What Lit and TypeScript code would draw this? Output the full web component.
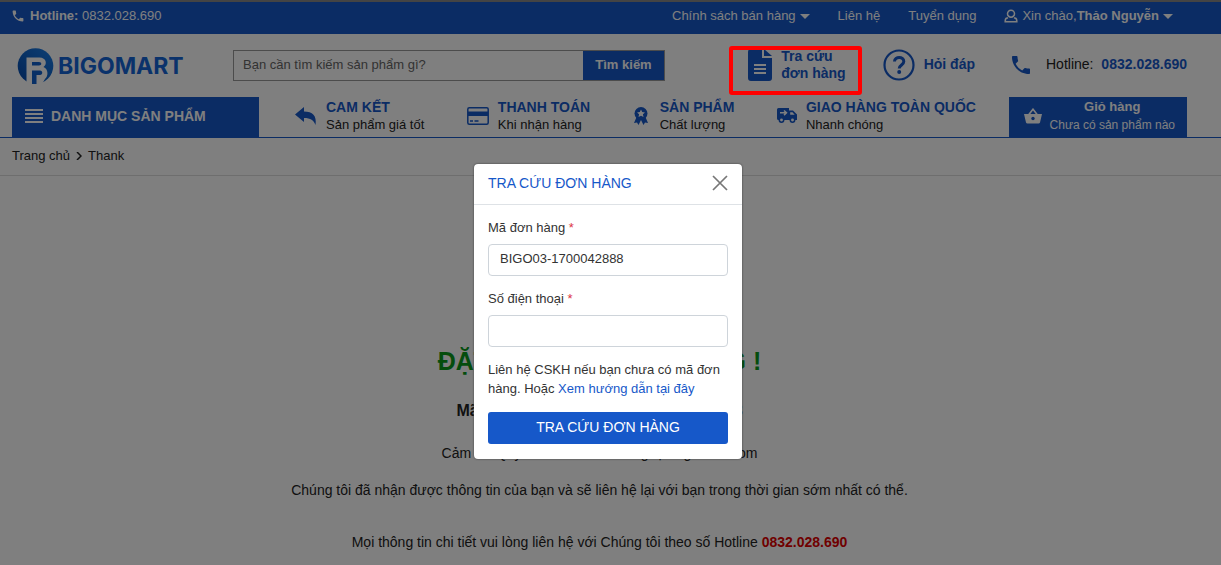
import { LitElement, html, css, svg } from "lit";
import { customElement, state } from "lit/decorators.js";

const icons = {
  phone: svg`<path fill="currentColor" d="M6.620 10.790c1.440 2.830 3.760 5.140 6.590 6.590l2.200-2.200c.27-.27.67-.36 1.020-.24 1.120.37 2.330.57 3.570.57.55 0 1 .45 1 1V20c0 .55-.45 1-1 1-9.390 0-17-7.610-17-17 0-.55.45-1 1-1h3.500c.55 0 1 .45 1 1 0 1.250.2 2.450.57 3.570.11.35.03.74-.25 1.020z"/>`,
  user: svg`<g fill="none" stroke="currentColor" stroke-width="2.600"><circle cx="12" cy="8" r="6"/><path d="M7 15.500H5.500c-2.500 0-3.500 2-3.500 6.500h20c0-4.500-1-6.500-3.500-6.500H17"/></g>`,
  file: svg`<path fill="currentColor" d="M3 0h11v9h10v20a3 3 0 0 1-3 3H3a3 3 0 0 1-3-3V3a3 3 0 0 1 3-3z"/><path fill="currentColor" d="M16 0l8 7h-8z"/><path stroke="#fff" stroke-width="2" d="M6 16h12M6 20h12M6 24h12"/>`,
  help: svg`<circle cx="16" cy="16" r="14.500" fill="none" stroke="currentColor" stroke-width="2.200"/><path d="M11.500 12.500c.2-5.500 9.300-5.500 9.300 0 0 3.500-4.600 3.400-4.600 7" fill="none" stroke="currentColor" stroke-width="3"/><circle cx="16.200" cy="23" r="2" fill="currentColor"/>`,
  reply: svg`<path fill="currentColor" d="M0 7.500L9 0v4.500c8.500 0 13 4 11.500 13.500-1.500-4.500-5-7-11.500-7V15z"/>`,
  card: svg`<rect x=".8" y=".8" width="20.400" height="16.400" rx="1.500" fill="none" stroke="currentColor" stroke-width="1.500"/><path fill="currentColor" d="M1 4.500h20v4.500H1z"/><path stroke="currentColor" stroke-width="1.500" d="M3 14h3M7.500 14h4"/>`,
  award: svg`<path fill="currentColor" d="M3 9L0 16l3-.5L4.500 18 7 13l2.500 5 1.500-2.500 3 .5-3-7z"/><circle cx="7" cy="6.500" r="6.500" fill="currentColor"/><path fill="#fff" d="M7 2.500l1.200 2.600 2.800.3-2.100 1.900.6 2.800L7 8.700l-2.500 1.400.6-2.800L3 5.400l2.800-.3z"/>`,
  truck: svg`<path fill="currentColor" d="M1.500 0H12v2.500h4l4 4V12H1.500A1.500 1.500 0 0 1 0 10.500v-9A1.500 1.500 0 0 1 1.500 0z"/><path fill="#fff" d="M13.200 4.200h2.300l2.200 2.600h-4.500z"/><path stroke="#fff" stroke-width="1.500" fill="none" d="M3 4.800h6M7 2.500l2.500 2.300L7 7.100"/><g fill="#fff" stroke="currentColor" stroke-width="1.500"><circle cx="4.500" cy="12" r="2.200"/><circle cx="15.500" cy="12" r="2.200"/></g>`,
  basket: svg`<path d="M4.500 7L9 1.200 13.500 7" fill="none" stroke="currentColor" stroke-width="1.600"/><path fill="currentColor" d="M0 6h18l-2 8.500a1.500 1.500 0 0 1-1.500 1H3.500a1.500 1.500 0 0 1-1.500-1z"/><circle cx="9" cy="10.500" r="1.700" fill="#1658c9"/>`,
};

@customElement("app-root")
export class AppRoot extends LitElement {
  @state() private code = "BIGO03-1700042888";
  @state() private open = true;

  static styles = css`
    :host {
      display: block;
      --blue: #1658c9;
      font-family: "Liberation Sans", Arial, sans-serif;
      font-size: 13px;
      line-height: 20px;
      color: #222;
    }
    * { box-sizing: border-box; }
    a { color: inherit; text-decoration: none; }
    button, input { font: inherit; color: inherit; }
    button { border: 0; cursor: pointer; }
    p, h1, h2 { margin: 0; }
    svg { display: block; flex: none; }
    .page { min-height: 100vh; background: #fff; border-top: 2px solid #888; overflow: hidden; }
    .wrap { display: flex; align-items: center; max-width: 1199px; padding: 0 12px; }
    .top { background: var(--blue); color: #fff; }
    .top .wrap { height: 32px; padding-bottom: 4px; }
    .top a { display: flex; align-items: center; gap: 4px; }
    .top .tel { gap: 6px; }
    .top nav { display: flex; gap: 28px; margin-left: auto; padding-right: 14px; }
    .caret { border: 5px solid transparent; border-top-color: currentColor; border-bottom: 0; }
    .head { height: 63px; }
    .logo { display: flex; align-items: center; gap: 4px; width: 221px; padding-left: 5px; font: 700 23px/36px Inter, sans-serif; color: #1465d6; }
    .search { display: flex; width: 432px; height: 31px; border: 1px solid #999; }
    .search input { flex: 1; min-width: 0; border: 0; padding: 0 9px 2px; background: #fff; outline: 0; }
    .search input::placeholder { color: #666; opacity: 1; }
    .search button { width: 81px; background: var(--blue); color: #fff; font-weight: 700; padding: 0 0 2px; }
    .links { display: flex; align-items: center; gap: 37px; margin-left: auto; padding-bottom: 2px; color: var(--blue); font-size: 14px; line-height: 17px; }
    .links a { display: flex; align-items: center; gap: 9px; }
    .links .call { gap: 16px; }
    .call span { color: #222; }
    .call b { color: var(--blue); margin-left: 4px; }
    .bar { border-bottom: 1px solid var(--blue); }
    .bar .wrap { height: 40px; align-items: stretch; }
    .cats { display: flex; align-items: center; gap: 8px; width: 247px; padding: 0 13px 2px; background: var(--blue); color: #fff; font-weight: 700; font-size: 14px; }
    .perks { flex: 1; display: flex; justify-content: space-between; padding: 0 33px 3px 36px; }
    .perk { display: flex; align-items: center; gap: 9px; line-height: 18px; }
    .perk svg { color: var(--blue); }
    .perk b { display: block; color: var(--blue); font-size: 14px; }
    .cart { display: flex; align-items: center; justify-content: space-between; width: 178px; padding: 0 12px 2px 15px; background: var(--blue); color: #fff; line-height: 18px; font-size: 12px; text-align: center; }
    .cart b { display: block; font-size: 13px; }
    .crumbs { border-bottom: 1px solid #ddd; }
    .crumbs .wrap { height: 37px; gap: 6px; padding-bottom: 2px; }
    .thanks { max-width: 1199px; padding-top: 169px; text-align: center; font-size: 14px; }
    .thanks h1 { color: #0a9a1a; font-size: 25px; line-height: 32px; margin-bottom: 24px; }
    .thanks h2 { font-size: 16px; line-height: 20px; margin-bottom: 22px; }
    .thanks p { margin-bottom: 17px; }
    .thanks .more { margin-top: 32px; }
    .more b { color: #e00000; }
    .overlay { position: absolute; inset: 0; display: flex; justify-content: center; align-items: flex-start; padding: 164px 5px 0 0; background: rgba(0, 0, 0, 0.5); }
    .modal { width: 268px; background: #fff; border-radius: 4px; color: #333; box-shadow: 0 0 2px #333; }
    .title { display: flex; align-items: center; justify-content: space-between; height: 41px; padding: 0 14px 2px; border-bottom: 1px solid #dee2e6; color: var(--blue); }
    .title h2 { font-size: 14px; font-weight: 400; }
    .title button { padding: 0; background: none; color: #777; }
    .modal form { padding: 13px 14px 15px; }
    .modal label { display: block; margin-bottom: 6px; }
    .modal i { color: #dc3545; font-style: normal; }
    .modal input { display: block; width: 100%; height: 32px; margin-bottom: 13px; padding: 0 11px 4px; border: 1px solid #ced4da; border-radius: 4px; background: #fff; }
    .modal p { line-height: 19px; margin-bottom: 14px; }
    .modal p a { color: var(--blue); }
    .submit { width: 100%; height: 32px; padding: 0 0 2px; background: var(--blue); color: #fff; border-radius: 3px; font-size: 14px; }
    .mark { position: absolute; left: 729px; top: 46px; width: 133px; height: 49px; border: 4px solid #f00; border-radius: 3px; pointer-events: none; }
  `;

  private icon(name: keyof typeof icons, w: number, h: number, box = `0 0 ${w} ${h}`) {
    return html`<svg width=${w} height=${h} viewBox=${box} aria-hidden="true">${icons[name]}</svg>`;
  }

  private perk(icon: unknown, title: string, note: string) {
    return html`<div class="perk">${icon}<div><b>${title}</b>${note}</div></div>`;
  }

  render() {
    return html`
      <div class="page">
        <div class="top"><div class="wrap">
          <a class="tel" href="tel:0832028690">${this.icon("phone", 12, 12, "2 2 20 20")}<span><b>Hotline:</b> 0832.028.690</span></a>
          <nav>
            <a href="#">Chính sách bán hàng <span class="caret"></span></a>
            <a href="#">Liên hệ</a>
            <a href="#">Tuyển dụng</a>
            <a href="#">${this.icon("user", 14, 14, "0 0 24 24")}<span>Xin chào,<b>Thảo Nguyễn</b></span><span class="caret"></span></a>
          </nav>
        </div></div>
        <header class="wrap head">
          <a class="logo" href="#">
            <svg width="37" height="36" viewBox="0 0 37 36" aria-hidden="true">
              <defs><linearGradient id="g" x1="0" y1="1" x2="1" y2="0"><stop offset="0" stop-color="#0648a8"/><stop offset="1" stop-color="#1a80ea"/></linearGradient></defs>
              <circle cx="18.500" cy="18" r="17.800" fill="url(#g)"/>
              <path fill="#fff" d="M9.500 9.500h13c7 0 8 7 4 9.500 5 2 5 9 1.500 12L25 36H9.500z"/>
              <path fill="#1060cc" d="M15 14h7c3 0 3 3.500 0 3.500h-7zM15 22.500h8c3 0 3 4.500 0 4.500h-3.500v9H15z"/>
            </svg>
            BIGOMART
          </a>
          <form class="search" @submit=${(e: Event) => e.preventDefault()}>
            <input type="search" aria-label="Tìm kiếm sản phẩm" placeholder="Bạn cần tìm kiếm sản phẩm gì?" />
            <button>Tìm kiếm</button>
          </form>
          <div class="links">
            <a href="#">${this.icon("file", 24, 32)}<b>Tra cứu<br />đơn hàng</b></a>
            <a href="#">${this.icon("help", 32, 32)}<b>Hỏi đáp</b></a>
            <a class="call" href="tel:0832028690">${this.icon("phone", 18, 18, "3 3 18 18")}<span>Hotline: <b>0832.028.690</b></span></a>
          </div>
        </header>
        <div class="bar"><div class="wrap">
          <button class="cats"><svg width="18" height="14" viewBox="0 0 18 14" aria-hidden="true"><path stroke="currentColor" stroke-width="2" d="M0 1h18M0 5h18M0 9h18M0 13h18"/></svg>DANH MỤC SẢN PHẨM</button>
          <div class="perks">
            ${this.perk(this.icon("reply", 22, 18), "CAM KẾT", "Sản phẩm giá tốt")}
            ${this.perk(this.icon("card", 22, 18), "THANH TOÁN", "Khi nhận hàng")}
            ${this.perk(this.icon("award", 18, 18, "-1 0 18 18"), "SẢN PHẨM", "Chất lượng")}
            ${this.perk(this.icon("truck", 20, 15), "GIAO HÀNG TOÀN QUỐC", "Nhanh chóng")}
          </div>
          <a class="cart" href="#">${this.icon("basket", 18, 16)}<span><b>Giỏ hàng</b>Chưa có sản phẩm nào</span></a>
        </div></div>
        <div class="crumbs"><div class="wrap">
          <a href="#">Trang chủ</a>
          <svg width="6" height="8" viewBox="0 0 6 8" aria-hidden="true"><path d="M1 0l4 4-4 4" fill="none" stroke="currentColor" stroke-width="1.500"/></svg>
          <span>Thank</span>
        </div></div>
        <main class="thanks">
          <h1>ĐẶT HÀNG THÀNH CÔNG !</h1>
          <h2>Mã số đơn hàng: BIGO03-1700042888</h2>
          <p>Cảm ơn Quý khách đã mua hàng tại Bigomart.com</p>
          <p>Chúng tôi đã nhận được thông tin của bạn và sẽ liên hệ lại với bạn trong thời gian sớm nhất có thể.</p>
          <p class="more">Mọi thông tin chi tiết vui lòng liên hệ với Chúng tôi theo số Hotline <b>0832.028.690</b></p>
        </main>
      </div>
      ${this.open ? html`<div class="overlay">
        <section class="modal" role="dialog" aria-labelledby="dlg">
          <div class="title">
            <h2 id="dlg">TRA CỨU ĐƠN HÀNG</h2>
            <button aria-label="Đóng" @click=${() => (this.open = false)}><svg width="16" height="16" viewBox="0 0 16 16" aria-hidden="true"><path d="M1 1l14 14M15 1L1 15" stroke="currentColor" stroke-width="1.700"/></svg></button>
          </div>
          <form @submit=${(e: Event) => e.preventDefault()}>
            <label for="code">Mã đơn hàng <i>*</i></label>
            <input id="code" .value=${this.code} @input=${(e: Event) => (this.code = (e.target as HTMLInputElement).value)} />
            <label for="phone">Số điện thoại <i>*</i></label>
            <input id="phone" type="tel" />
            <p>Liên hệ CSKH nếu bạn chưa có mã đơn hàng. Hoặc <a href="#">Xem hướng dẫn tại đây</a></p>
            <button class="submit">TRA CỨU ĐƠN HÀNG</button>
          </form>
        </section>
      </div>` : ""}
      <div class="mark"></div>
    `;
  }
}
